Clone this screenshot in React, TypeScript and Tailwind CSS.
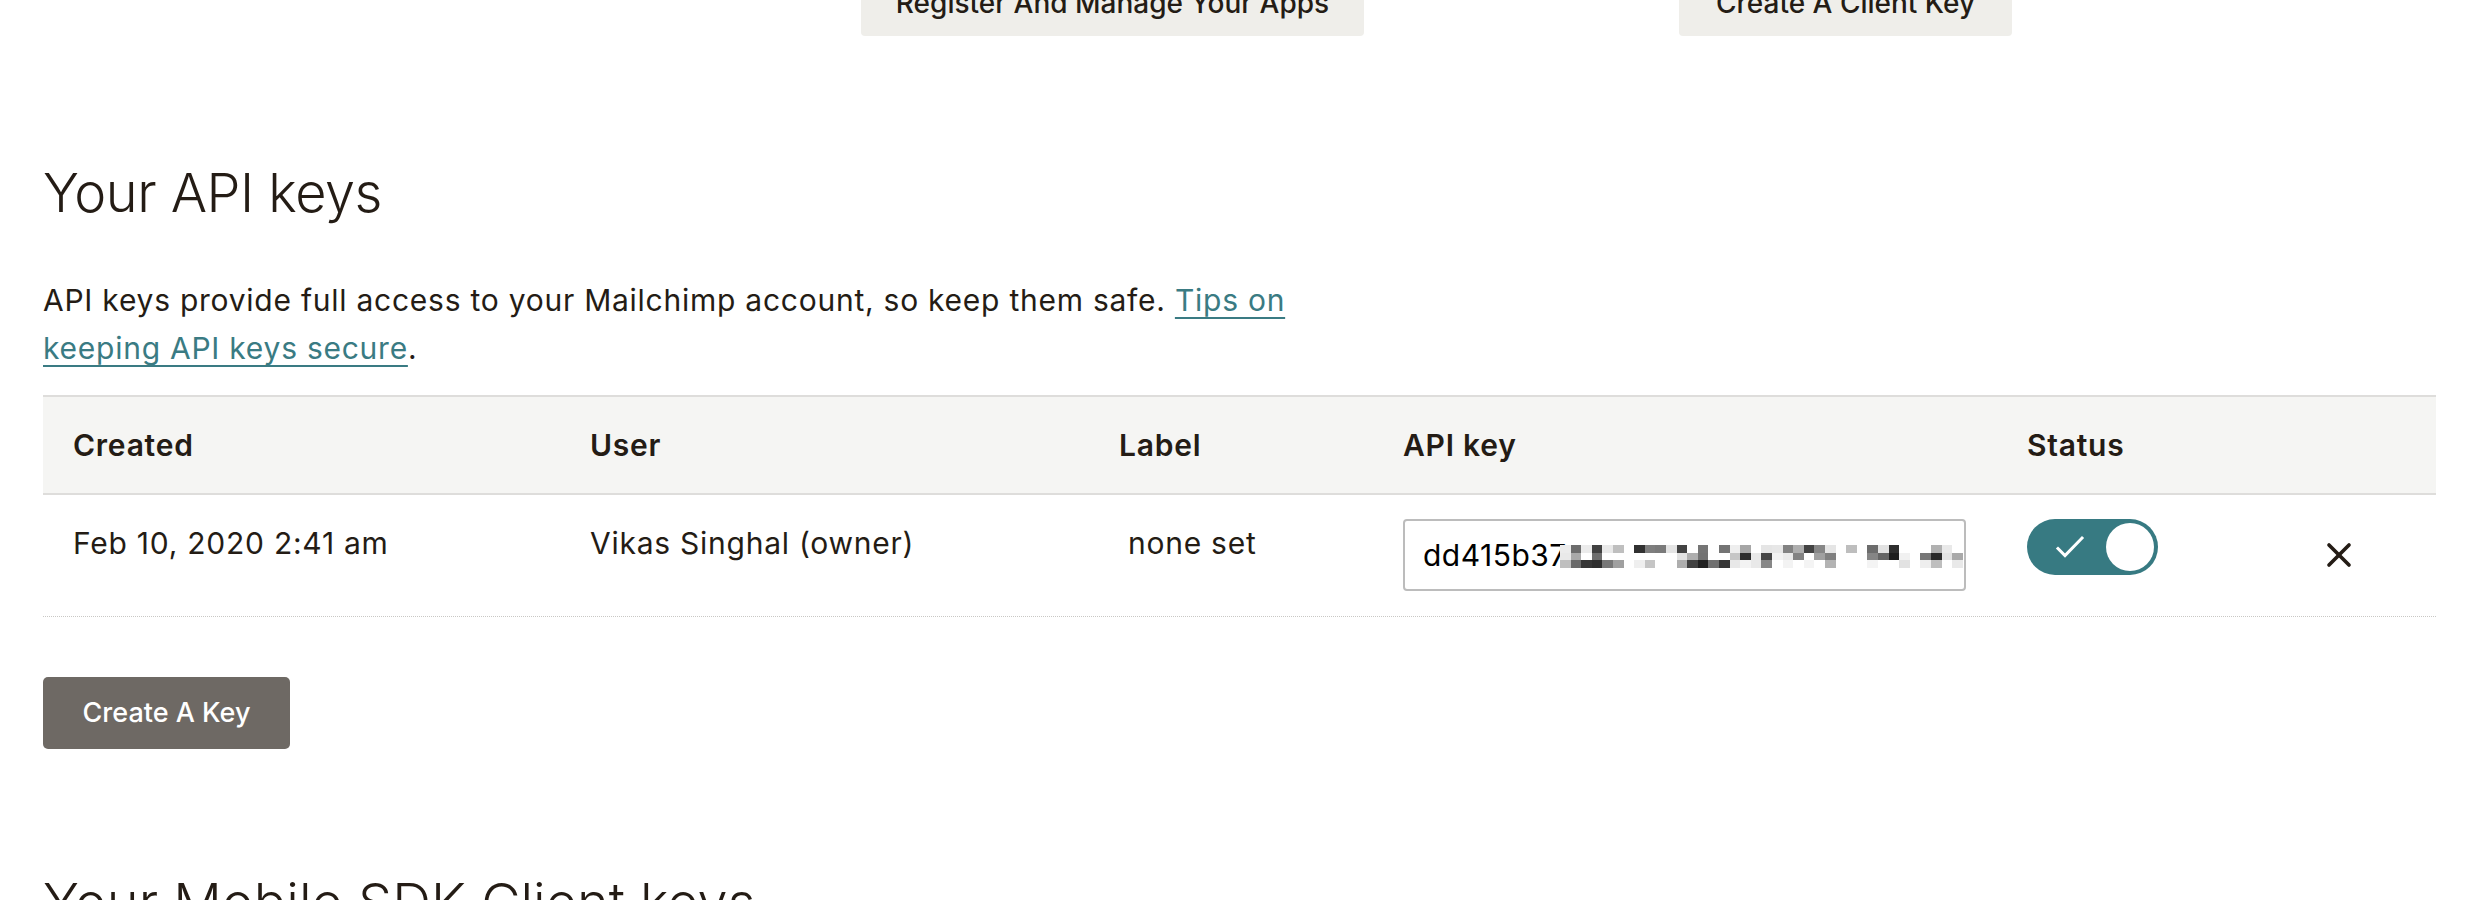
import { X } from 'lucide-react'

// deterministic grey mosaic for the blurred part of the key
function Mosaic() {
  const cols = 38
  const rows = 3
  const cells: { x: number; y: number; c: string }[] = []
  let seed = 7
  const rnd = () => {
    seed = (seed * 9301 + 49297) % 233280
    return seed / 233280
  }
  for (let r = 0; r < rows; r++) {
    for (let c = 0; c < cols; c++) {
      const v = rnd()
      let g = 255
      if (v < 0.1) g = 30 + Math.floor(rnd() * 40)
      else if (v < 0.26) g = 100 + Math.floor(rnd() * 40)
      else if (v < 0.42) g = 160 + Math.floor(rnd() * 40)
      else if (v < 0.6) g = 225 + Math.floor(rnd() * 20)
      cells.push({ x: c * 10.6, y: r * 7.7, c: `rgb(${g},${g},${g})` })
    }
  }
  return (
    <svg width="403" height="23" viewBox="0 0 403 23" shapeRendering="crispEdges" className="shrink-0">
      {cells.map((k, i) => (
        <rect key={i} x={k.x} y={k.y} width="10.7" height="7.8" fill={k.c} />
      ))}
    </svg>
  )
}

function Toggle() {
  return (
    <div className="w-[131px] h-[56px] rounded-full bg-[#377a82] flex items-center justify-between pl-[28px] pr-[4px]">
      <svg width="30" height="24" viewBox="0 0 30 24" fill="none">
        <path d="M3 13.5 L10 20.5 L27 3" stroke="#fff" strokeWidth="3" strokeLinecap="square" />
      </svg>
      <div className="w-[48px] h-[48px] rounded-full bg-white" />
    </div>
  )
}

export default function App() {
  return (
    <div className="min-h-[900px] bg-white text-[#241c15] [font-family:Inter,sans-serif] overflow-hidden">
      {/* buttons scrolled mostly off the top */}
      <div className="h-[36px] overflow-hidden flex ml-[861px] gap-[315px]">
        <div className="w-[503px] h-full bg-[#efeeea] rounded-b-[4px] flex items-end justify-center pb-[19px] text-[28px] leading-none font-medium">
          Register And Manage Your Apps
        </div>
        <div className="w-[333px] h-full bg-[#efeeea] rounded-b-[4px] flex items-end justify-center pb-[19px] text-[28px] leading-none font-medium">
          Create A Client Key
        </div>
      </div>

      <div className="pl-[43px] pr-[40px]">
        <h2 className="mt-[124px] text-[54px] leading-[65px] font-light tracking-[-0.5px]">Your API keys</h2>

        <p className="mt-[51px] w-[1250px] text-[30px] leading-[48px] tracking-[0.75px]">
          API keys provide full access to your Mailchimp account, so keep them safe.{' '}
          <a className="text-[#3a7b83] underline decoration-2 underline-offset-[6px]">Tips on keeping API keys secure</a>.
        </p>

        {/* keys table */}
        <div className="mt-[23px] text-[30px] tracking-[0.75px]">
          <div className="grid grid-cols-[517px_529px_284px_624px_300px_1fr] items-center h-[100px] bg-[#f5f5f3] border-y-2 border-[#dedddb] font-semibold">
            <div className="pl-[30px]">Created</div>
            <div className="pl-[30px]">User</div>
            <div className="pl-[30px]">Label</div>
            <div className="pl-[30px]">API key</div>
            <div className="pl-[30px]">Status</div>
            <div />
          </div>
          <div className="grid grid-cols-[517px_529px_284px_624px_300px_1fr] items-start pt-[24px] pb-[25px] border-b border-dotted border-[#c9c8c5] leading-[48px]">
            <div className="pl-[30px]">Feb 10, 2020 2:41 am</div>
            <div className="pl-[30px]">Vikas Singhal (owner)</div>
            <div className="pl-[39px]">none set</div>
            <div className="pl-[30px]">
              <div className="w-[563px] h-[72px] border-2 border-[#bcbcbc] rounded-[4px] flex items-center pl-[18px] overflow-hidden">
                <span className="text-black tracking-[0.5px]">dd415b37</span>
                <div className="-ml-[7px] mt-[2px]">
                  <Mosaic />
                </div>
              </div>
            </div>
            <div className="pl-[30px]">
              <Toggle />
            </div>
            <div className="pl-[22px] h-[72px] flex items-center">
              <X size={40} strokeWidth={2.2} className="text-[#241c15]" />
            </div>
          </div>
        </div>

        <button className="mt-[60px] w-[247px] h-[72px] rounded-[5px] bg-[#6e6964] text-white text-[27px] font-medium">
          Create A Key
        </button>

        <h2 className="mt-[121px] text-[54px] leading-[65px] font-light">Your Mobile SDK Client keys</h2>
      </div>
    </div>
  )
}
